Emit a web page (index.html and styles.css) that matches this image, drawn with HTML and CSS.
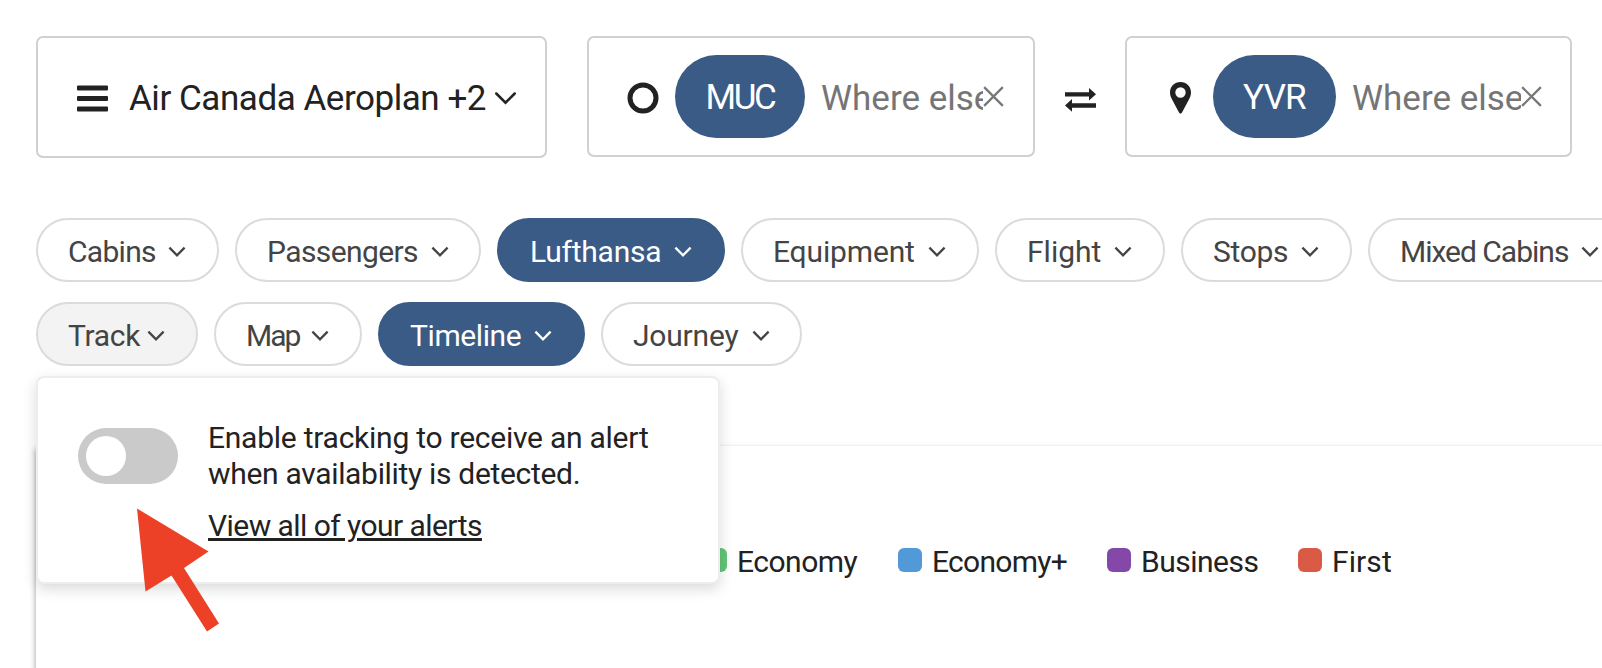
FILE: index.html
```html
<!DOCTYPE html>
<html lang="en">
<head>
<meta charset="utf-8">
<title>Flight search</title>
<link rel="stylesheet" href="styles.css">
</head>
<body>
<svg class="defs" width="0" height="0" aria-hidden="true">
  <symbol id="chevron" viewBox="0 0 18 12"><path d="M1.4 1.6 9 9.3l7.6-7.7" fill="none" stroke="currentColor" stroke-width="2.3"/></symbol>
  <symbol id="close" viewBox="0 0 22 22"><path d="M1.2 1.2l19.6 19.6M20.8 1.2L1.2 20.8" fill="none" stroke="currentColor" stroke-width="2.4"/></symbol>
</svg>
<main class="page">
  <section class="search">
    <button class="field field-program">
      <svg class="menu-icon" viewBox="0 0 31 27"><path d="M1 .5h29a1 1 0 0 1 1 1v3a1 1 0 0 1-1 1H1a1 1 0 0 1-1-1v-3a1 1 0 0 1 1-1zM1 11h29a1 1 0 0 1 1 1v3a1 1 0 0 1-1 1H1a1 1 0 0 1-1-1v-3a1 1 0 0 1 1-1zM1 21.500h29a1 1 0 0 1 1 1v3a1 1 0 0 1-1 1H1a1 1 0 0 1-1-1v-3a1 1 0 0 1 1-1z" fill="currentColor"/></svg>
      <span class="program-name">Air Canada Aeroplan +2</span>
      <svg class="program-chevron" viewBox="0 0 21 13"><path d="M1.300 1.500l9.200 9.200 9.200-9.200" fill="none" stroke="currentColor" stroke-width="2.500" stroke-linecap="round"/></svg>
    </button>
    <div class="field field-origin">
      <svg class="circle-icon" viewBox="0 0 32 32"><circle cx="16" cy="16" r="13" fill="none" stroke="currentColor" stroke-width="5"/></svg>
      <span class="airport airport-muc">MUC</span>
      <span class="placeholder placeholder-origin">Where else?</span>
      <svg class="close"><use href="#close"/></svg>
    </div>
    <svg class="swap" viewBox="0 0 31 24"><path d="M0 4.300h24V0l7 6.300-7 6.300V8.500H0zM31 15.300H7V11L0 17.400 7 23.700v-4h24z" fill="currentColor"/></svg>
    <div class="field field-destination">
      <svg class="pin-icon" viewBox="0 0 21 32"><path fill-rule="evenodd" d="M10.500 0C4.500 0 0 4.600 0 10.500c0 3 1 5 2.200 7.200L9 30.500c.8 1.500 2.200 1.500 3 0l6.800-12.800C20 15.500 21 13.500 21 10.500 21 4.600 16.500 0 10.500 0zm0 5.300a5.200 5.200 0 1 1 0 10.400 5.200 5.200 0 0 1 0-10.400z" fill="currentColor"/></svg>
      <span class="airport airport-yvr">YVR</span>
      <span class="placeholder placeholder-destination">Where else?</span>
      <svg class="close"><use href="#close"/></svg>
    </div>
  </section>

  <nav class="filters">
    <div class="chip-row">
      <button class="chip cabins"><span>Cabins</span><svg><use href="#chevron"/></svg></button>
      <button class="chip passengers"><span>Passengers</span><svg><use href="#chevron"/></svg></button>
      <button class="chip active lufthansa"><span>Lufthansa</span><svg><use href="#chevron"/></svg></button>
      <button class="chip equipment"><span>Equipment</span><svg><use href="#chevron"/></svg></button>
      <button class="chip flight"><span>Flight</span><svg><use href="#chevron"/></svg></button>
      <button class="chip stops"><span>Stops</span><svg><use href="#chevron"/></svg></button>
      <button class="chip mixed"><span>Mixed Cabins</span><svg><use href="#chevron"/></svg></button>
    </div>
    <div class="chip-row">
      <button class="chip open track"><span>Track</span><svg><use href="#chevron"/></svg></button>
      <button class="chip map"><span>Map</span><svg><use href="#chevron"/></svg></button>
      <button class="chip active timeline"><span>Timeline</span><svg><use href="#chevron"/></svg></button>
      <button class="chip journey"><span>Journey</span><svg><use href="#chevron"/></svg></button>
    </div>
    <aside class="popover">
      <span class="toggle"><span class="knob"></span></span>
      <div class="popover-text">
        <p><span class="line-one">Enable tracking to receive an alert</span><br><span class="line-two">when availability is detected.</span></p>
        <a>View all of your alerts</a>
      </div>
    </aside>
  </nav>

  <section class="panel">
    <ul class="legend">
      <li class="economy"><i></i><span>Economy</span></li>
      <li class="economy-plus"><i></i><span>Economy+</span></li>
      <li class="business"><i></i><span>Business</span></li>
      <li class="first"><i></i><span>First</span></li>
    </ul>
  </section>
</main>
<svg class="pointer" viewBox="0 0 84 125"><path d="M1 .5 72.500 43.500 48 60 83 115.500 71 123.500 35.500 67.500 9.500 83.500z" fill="#ec4127"/></svg>
</body>
</html>
```

FILE: styles.css
```css
* { box-sizing: border-box; }

body {
  margin: 0;
  width: 1602px;
  height: 668px;
  overflow: hidden;
  position: relative;
  background: #fff;
  color: #222;
  font-family: Roboto, "Liberation Sans", sans-serif;
}

button {
  font: inherit;
  color: inherit;
  background: #fff;
  text-align: left;
}

svg { display: block; flex: none; }
.defs { position: absolute; }

.page {
  height: 668px;
  padding: 36px 0 0 36px;
  display: flex;
  flex-direction: column;
  overflow: hidden;
}

/* Search fields */
.search {
  display: flex;
  align-items: flex-start;
  height: 122px;
  font-size: 35px;
}

.field {
  display: flex;
  align-items: center;
  flex: none;
  height: 121px;
  border: 2px solid #d0d0d0;
  border-radius: 7px;
  white-space: nowrap;
}

.field-program { width: 511px; height: 122px; padding: 2px 0 0 39px; }
.menu-icon { width: 31px; height: 27px; }
.program-name { width: 366px; margin-left: 21px; letter-spacing: -0.46px; }
.program-chevron { width: 21px; height: 13px; }

.field-origin { width: 448px; margin-left: 40px; padding-left: 38px; }
.circle-icon { width: 32px; height: 32px; margin-top: 3px; }
.swap { width: 31px; height: 24px; margin: 52px 29px 0 30px; }
.field-destination { width: 447px; padding-left: 43px; }
.pin-icon { width: 21px; height: 32px; margin-top: 3px; }

.airport {
  flex: none;
  height: 83px;
  padding-top: 2px;
  border-radius: 42px;
  background: #395b86;
  color: #fff;
  line-height: 82px;
  text-align: center;
}
.airport-muc { width: 130px; margin-left: 16px; letter-spacing: -2.4px; }
.airport-yvr { width: 123px; margin-left: 22px; letter-spacing: -0.8px; }

.placeholder {
  flex: none;
  margin: 3px 0 0 16px;
  overflow: hidden;
  color: #757575;
}
.placeholder-origin { width: 162px; }
.placeholder-destination { width: 169px; }
.close { width: 21px; height: 21px; color: #777; }

/* Filter chips */
.filters {
  position: relative;
  margin-top: 60px;
  height: 148px;
  display: flex;
  flex-direction: column;
  gap: 20px;
  font-size: 30px;
}

.chip-row { display: flex; gap: 16px; }

.chip {
  display: flex;
  align-items: center;
  justify-content: space-between;
  flex: none;
  height: 64px;
  padding: 2px 31px 0 30px;
  border: 2px solid #dadbdd;
  border-radius: 32px;
  color: #444;
  white-space: nowrap;
}
.chip svg { width: 18px; height: 12px; margin-top: 2px; }
.chip.active { background: #395b86; border-color: #395b86; color: #fff; }
.chip.open { background: #f3f3f3; }

.cabins { width: 183px; letter-spacing: -0.7px; }
.passengers { width: 246px; padding-right: 30px; letter-spacing: -0.6px; }
.lufthansa { width: 228px; padding-left: 31px; letter-spacing: -0.25px; }
.equipment { width: 238px; letter-spacing: -0.15px; }
.flight { width: 170px; letter-spacing: 0; }
.stops { width: 171px; letter-spacing: -0.3px; }
.mixed { width: 264px; letter-spacing: -1px; }
.track { width: 162px; letter-spacing: -0.3px; }
.map { width: 148px; letter-spacing: -2px; }
.timeline { width: 207px; letter-spacing: -0.4px; }
.journey { width: 201px; padding-right: 30px; letter-spacing: -0.2px; }

/* Tracking popover */
.popover {
  position: absolute;
  z-index: 2;
  left: 0;
  top: 158px;
  width: 684px;
  height: 208px;
  display: flex;
  padding: 42px 0 0 40px;
  border: 2px solid #ededed;
  border-radius: 8px;
  background: #fff;
  box-shadow: 0 5px 14px rgba(0, 0, 0, 0.15);
}
.toggle {
  width: 100px;
  height: 56px;
  margin-top: 8px;
  padding: 8px;
  border-radius: 28px;
  background: #cacaca;
}
.knob { display: block; width: 40px; height: 40px; border-radius: 50%; background: #fff; }
.popover-text { margin-left: 30px; line-height: 36px; white-space: nowrap; }
.popover-text p { margin: 0 0 16px; }
.line-one { letter-spacing: -0.25px; }
.line-two { letter-spacing: -0.32px; }
.popover-text a {
  letter-spacing: -0.55px;
  text-decoration: underline;
  text-decoration-thickness: 3px;
  text-underline-offset: 2px;
}

/* Results panel */
.panel {
  flex: none;
  width: 1600px;
  height: 300px;
  margin-top: 80px;
  padding-top: 96px;
  background: #fff;
  box-shadow: 0 3px 6px rgba(0, 0, 0, 0.4);
}
.legend {
  display: flex;
  margin: 0;
  padding: 0 0 0 667px;
  list-style: none;
  font-size: 30px;
}
.legend li { display: flex; align-items: center; height: 36px; }
.legend i { width: 24px; height: 24px; border-radius: 6px; margin-right: 10px; }
.legend span { padding-top: 2px; white-space: nowrap; letter-spacing: -0.5px; }
.economy { width: 195px; }
.economy i { background: #62c578; }
.economy-plus { width: 209px; }
.economy-plus i { background: #5299d8; }
.legend .economy-plus span { letter-spacing: -0.7px; }
.business { width: 191px; }
.business i { background: #8448a8; }
.first i { background: #d95b45; }
.legend .first span { letter-spacing: 0.1px; }

/* Callout arrow */
.pointer {
  position: absolute;
  z-index: 3;
  left: 136px;
  top: 508px;
  width: 84px;
  height: 125px;
}
```
